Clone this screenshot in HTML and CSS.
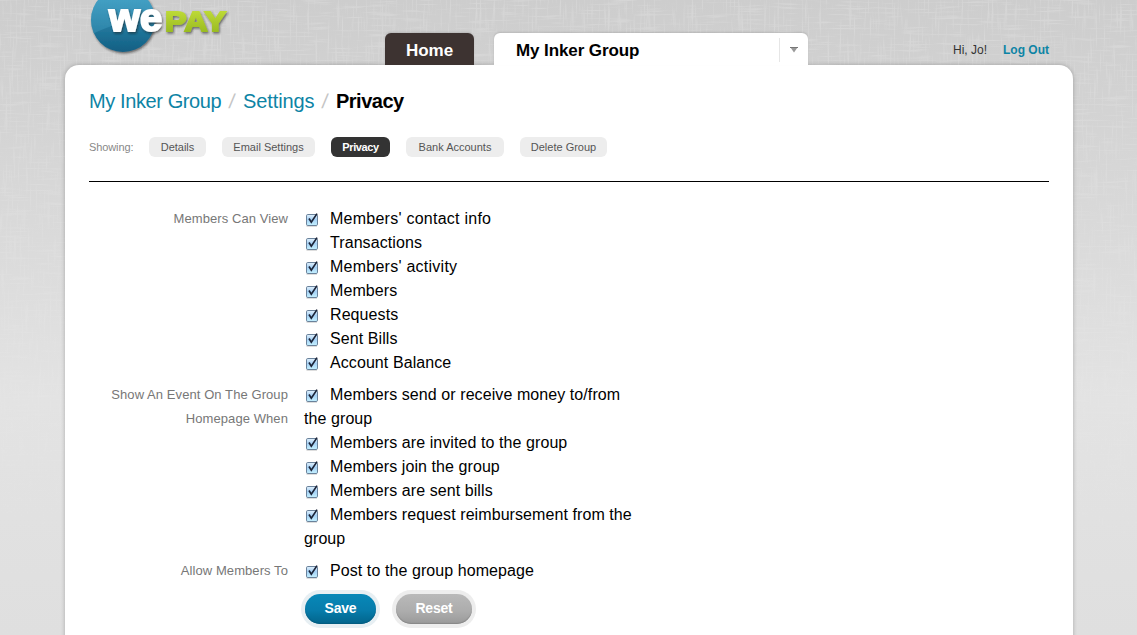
FILE: index.html
```html
<!DOCTYPE html>
<html lang="en">
<head>
<meta charset="utf-8">
<title>My Inker Group - Privacy</title>
<link rel="stylesheet" href="styles.css">
</head>
<body>
<svg class="texture" width="1137" height="635" aria-hidden="true">
  <defs>
    <filter id="weave-h" x="0" y="0" width="100%" height="100%" color-interpolation-filters="sRGB"><feTurbulence type="fractalNoise" baseFrequency="0.03 0.5" numOctaves="2" seed="4"/><feColorMatrix values="0 0 0 0 1  0 0 0 0 1  0 0 0 0 1  4 0 0 0 -2.15"/></filter>
    <filter id="weave-v" x="0" y="0" width="100%" height="100%" color-interpolation-filters="sRGB"><feTurbulence type="fractalNoise" baseFrequency="0.5 0.03" numOctaves="2" seed="9"/><feColorMatrix values="0 0 0 0 1  0 0 0 0 1  0 0 0 0 1  4 0 0 0 -2.15"/></filter>
    <linearGradient id="fade" x1="0" y1="0" x2="0" y2="1"><stop offset="0" stop-color="#fff"/><stop offset="1" stop-color="#000"/></linearGradient>
    <mask id="fade-mask"><rect width="1137" height="560" fill="url(#fade)"/></mask>
  </defs>
  <g mask="url(#fade-mask)" opacity=".17">
    <rect width="1137" height="635" filter="url(#weave-h)"/>
    <rect width="1137" height="635" filter="url(#weave-v)"/>
  </g>
</svg>
<div class="page">
  <header class="header">
    <svg class="logo" width="160" height="65" viewBox="0 0 160 65" role="img" aria-label="WePay">
      <defs>
        <linearGradient id="ball" x1="0" y1="0" x2="0" y2="1"><stop offset=".2" stop-color="#3593b9"/><stop offset="1" stop-color="#125f83"/></linearGradient>
        <linearGradient id="shine" x1="0" y1="0" x2="0" y2="1"><stop offset="0" stop-color="#5bb5d5" stop-opacity=".4"/><stop offset="1" stop-color="#4aa8cb" stop-opacity=".3"/></linearGradient>
        <linearGradient id="lime" gradientUnits="userSpaceOnUse" x1="0" y1="10" x2="0" y2="32"><stop offset="0" stop-color="#bfdb38"/><stop offset="1" stop-color="#9abb22"/></linearGradient>
        <filter id="drop" x="-20%" y="-20%" width="140%" height="150%"><feDropShadow dx="1" dy="1.5" stdDeviation="1" flood-color="#222" flood-opacity=".6"/></filter>
        <clipPath id="ball-clip"><circle cx="34" cy="20" r="32"/></clipPath>
      </defs>
      <circle cx="34" cy="20" r="32" fill="url(#ball)" filter="url(#drop)"/>
      <path d="M0 36C16 27 40 19 70 17V-15H0Z" fill="url(#shine)" clip-path="url(#ball-clip)"/>
      <text class="logo-we" x="20" y="30.500" textLength="53" lengthAdjust="spacingAndGlyphs" filter="url(#drop)">we</text>
      <text class="logo-pay" x="76" y="30.500" textLength="61" lengthAdjust="spacingAndGlyphs" fill="url(#lime)" stroke="url(#lime)" filter="url(#drop)">PAY</text>
    </svg>
    <nav class="tabs">
      <a class="tab tab-home">Home</a>
      <a class="tab tab-group"><span>My Inker Group</span><span class="tab-menu"><svg width="8" height="6" viewBox="0 0 8 6"><path d="M.5.5h7L4 5.5Z" fill="#999"/><path d="M0 .5h8" stroke="#777"/></svg></span></a>
    </nav>
    <div class="account"><span>Hi, Jo!</span><a class="logout">Log Out</a></div>
  </header>
  <main class="panel">
    <h1 class="crumbs"><a class="crumb-group">My Inker Group</a><i>/</i><a class="crumb-settings">Settings</a><i>/</i><b>Privacy</b></h1>
    <nav class="filters">
      <span class="filters-label">Showing:</span>
      <a class="pill pill-details">Details</a>
      <a class="pill pill-email">Email Settings</a>
      <a class="pill pill-privacy">Privacy</a>
      <a class="pill pill-bank">Bank Accounts</a>
      <a class="pill pill-delete">Delete Group</a>
    </nav>
    <svg width="0" height="0" class="sprite"><defs>
      <linearGradient id="aqua" x1="0" y1="0" x2="0" y2="1"><stop offset="0" stop-color="#e4f2fd"/><stop offset=".45" stop-color="#a5d0f5"/><stop offset="1" stop-color="#c4f1ff"/></linearGradient>
      <symbol id="check" viewBox="0 0 14 15"><path d="M1.500 14h10.500" stroke="#bbb"/><rect x="1.500" y="2.500" width="11" height="11" rx="1.300" fill="url(#aqua)" stroke="#6a829b"/><path d="M4 6.500L6.300 10.200L12 1.600" fill="none" stroke="#1b2438" stroke-width="1.700"/></symbol>
    </defs></svg>
    <form class="form">
      <div class="row"><div class="label">Members Can View</div>
        <div class="options">
          <label><svg class="check"><use href="#check"/></svg><span class="wide">Members' contact info</span></label>
          <label><svg class="check"><use href="#check"/></svg>Transactions</label>
          <label><svg class="check"><use href="#check"/></svg><span class="wide">Members' activity</span></label>
          <label><svg class="check"><use href="#check"/></svg>Members</label>
          <label><svg class="check"><use href="#check"/></svg>Requests</label>
          <label><svg class="check"><use href="#check"/></svg>Sent Bills</label>
          <label><svg class="check"><use href="#check"/></svg>Account Balance</label>
        </div></div>
      <div class="row"><div class="label">Show An Event On The Group Homepage When</div>
        <div class="options">
          <label><svg class="check"><use href="#check"/></svg>Members send or receive money to/from the group</label>
          <label><svg class="check"><use href="#check"/></svg>Members are invited to the group</label>
          <label><svg class="check"><use href="#check"/></svg>Members join the group</label>
          <label><svg class="check"><use href="#check"/></svg>Members are sent bills</label>
          <label><svg class="check"><use href="#check"/></svg>Members request reimbursement from the group</label>
        </div></div>
      <div class="row"><div class="label">Allow Members To</div>
        <div class="options"><label><svg class="check"><use href="#check"/></svg>Post to the group homepage</label></div></div>
      <div class="actions"><button type="button" class="button save">Save</button><button type="button" class="button reset">Reset</button></div>
    </form>
  </main>
</div>
</body>
</html>
```

FILE: styles.css
```css
* { box-sizing: border-box; }
body {
  margin: 0; height: 635px; overflow: hidden; position: relative;
  font-family: "Liberation Sans", Arial, sans-serif; color: #000;
  background: linear-gradient(#cdcdcd, #d4d4d4 130px, #e3e3e3 400px, #dfdfdf);
}
.texture { position: absolute; inset: 0; }
.page { position: relative; width: 1008px; margin-left: 65px; }
.header { height: 65px; display: flex; align-items: flex-end; }
.logo { width: 160px; height: 65px; margin-left: 24px; flex: none; }
.logo-we { font: bold 39px "Liberation Sans", Arial, sans-serif; fill: #fff; stroke: #fff; stroke-width: 2px; }
.logo-pay { font: bold 28px "Liberation Sans", Arial, sans-serif; stroke-width: 1.8px; }
.tabs { display: flex; gap: 20px; margin-left: 136px; }
.tab { height: 32px; border-radius: 6px 6px 0 0; font-weight: bold; font-size: 17px; line-height: 35px; box-shadow: 0 -1px 2px rgba(0,0,0,.12); }
.tab-home { width: 89px; text-align: center; background: #3d3331; color: #fff; }
.tab-group { width: 314px; padding-left: 22px; background: #fff; display: flex; justify-content: space-between; letter-spacing: -.1px; }
.tab-menu { width: 29px; height: 24px; margin-top: 5px; border-left: 1px solid #e6e6e6; display: flex; justify-content: center; align-items: center; }
.account { margin-left: auto; margin-right: 24px; height: 23px; display: flex; gap: 16px; font-size: 12px; line-height: 16px; color: #333; }
.logout { font-weight: bold; color: #0d84a5; }
.panel { height: 580px; padding: 22px 24px 0; background: #fff; border-radius: 14px 14px 0 0; box-shadow: 0 0 4px rgba(0,0,0,.24); }
.crumbs { margin: 0; height: 28px; line-height: 28px; font-size: 20px; font-weight: normal; display: flex; color: #0d84a5; }
.crumbs i { color: #c5c5c5; width: 22px; text-align: center; font-style: normal; transform: skewX(-8deg); }
.crumb-group { width: 132px; letter-spacing: -.4px; white-space: nowrap; }
.crumb-settings { width: 71px; letter-spacing: -.1px; }
.crumbs b { color: #000; letter-spacing: -.5px; }
.filters { height: 67px; padding-top: 22px; border-bottom: 1px solid #000; display: flex; gap: 16px; font-size: 11px; line-height: 20px; color: #888; }
.filters-label { width: 44px; white-space: nowrap; letter-spacing: -.1px; }
.pill { height: 20px; border-radius: 6px; background: #ededed; color: #555; text-align: center; white-space: nowrap; }
.pill-details { width: 57px; }
.pill-email { width: 93px; }
.pill-privacy { width: 59px; background: #333; color: #fff; font-weight: bold; letter-spacing: -.4px; }
.pill-bank { width: 98px; }
.pill-delete { width: 87px; }
.sprite { position: absolute; }
.form { padding-top: 25px; }
.row { display: flex; gap: 16px; margin-bottom: 8px; line-height: 24px; }
.label { width: 199px; padding-left: 16px; text-align: right; font-size: 13px; letter-spacing: .08px; color: #777; }
.options { width: 336px; font-size: 16px; letter-spacing: .08px; }
.options label { display: block; }
.wide { letter-spacing: .25px; }
.check { width: 14px; height: 15px; margin: 0 11px 0 1px; vertical-align: -3px; }
.actions { display: flex; gap: 20px; margin: -2px 0 0 216px; padding-top: 5px; }
.button { height: 30px; padding: 0 0 2px; border: 0; border-radius: 15px; font: bold 14px "Liberation Sans", Arial, sans-serif; letter-spacing: -.2px; color: #fff; }
.save { width: 71px; background: linear-gradient(#0788b8, #077cab 55%, #04719c 75%, #04658c); box-shadow: 0 0 0 4px #e7eff3, inset 0 -1px 1px #045c80; }
.reset { width: 76px; background: linear-gradient(#b9b9b9, #adadad 55%, #a5a5a5 75%, #999); box-shadow: 0 0 0 4px #ededed, inset 0 -1px 1px #888; }
```
